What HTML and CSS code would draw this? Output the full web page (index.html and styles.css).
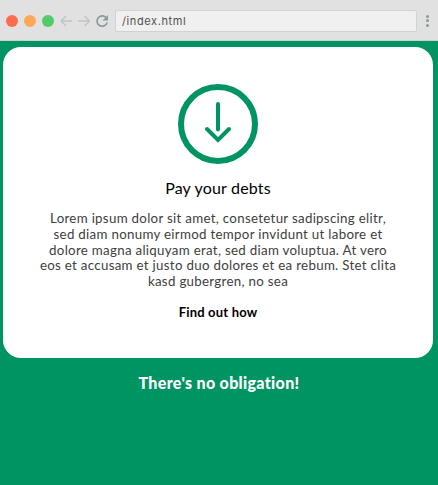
FILE: index.html
```html
<!DOCTYPE html>
<html lang="en">
<head>
<meta charset="utf-8">
<title>Pay your debts</title>
<link rel="stylesheet" href="styles.css">
</head>
<body>
<header class="toolbar">
  <div class="lights"><i class="red"></i><i class="amber"></i><i class="green"></i></div>
  <svg class="nav" width="50" height="16" viewBox="0 0 50 16" fill="none" stroke-width="1.3">
    <path stroke="#bfc3c5" d="M12 8H1M6 3L1 8l5 5M18 8H29.500M24.500 3l5 5-5 5"/>
    <path stroke="#8c989e" stroke-width="1.6" d="M46 4.500A5.200 5.200 0 1 0 47.200 9.500"/>
    <path fill="#8c989e" d="M48 2v5.500H42.500z"/>
  </svg>
  <div class="address">/index.html</div>
  <div class="menu"><i></i><i></i><i></i></div>
</header>
<main>
  <section class="card">
    <svg class="icon" width="80" height="80" viewBox="0 0 80 80" fill="none" stroke="#009463">
      <circle cx="40" cy="40" r="37" stroke-width="6"/>
      <path d="M40 20v25.500M29 45l11 11 11-11" stroke-width="4" stroke-linecap="round"/>
    </svg>
    <h1>Pay your debts</h1>
    <p>Lorem ipsum dolor sit amet, consetetur sadipscing elitr,<br>sed diam nonumy eirmod tempor invidunt ut labore et<br>dolore magna aliquyam erat, sed diam voluptua. At vero<br>eos et accusam et justo duo dolores et ea rebum. Stet clita<br>kasd gubergren, no sea</p>
    <a class="link">Find out how</a>
  </section>
  <h2>There's no obligation!</h2>
</main>
</body>
</html>
```
FILE: styles.css
```css
* { box-sizing: border-box; }
body { margin: 0; height: 485px; overflow: hidden; background: #009463; font-family: Lato, sans-serif; }
.toolbar { height: 41px; display: flex; align-items: center; padding: 1px 9px 0 6px; background: #e1e1e1; border-bottom: 1px solid #cfcfcf; }
.lights { display: flex; gap: 6px; }
.lights i { width: 12px; height: 12px; border-radius: 50%; }
.red { background: #ff6b4f; }
.amber { background: #ffa857; }
.green { background: #53cb68; }
.nav { margin-left: 6px; }
.address { width: 302px; height: 22px; margin-left: 5px; padding-left: 6px; border: 1px solid #d2d2d2; border-radius: 2px; background: #f0f0f0; color: #505050; font: 11px/20px Inter, sans-serif; letter-spacing: .6px; }
.menu { display: flex; flex-direction: column; gap: 1.500px; margin-left: auto; }
.menu i { width: 3px; height: 3px; border-radius: 50%; background: #8c989e; }
.card { display: flex; flex-direction: column; align-items: center; width: 430px; height: 311px; margin: 6px 0 0 3px; padding-top: 37px; border-radius: 18px; background: #fff; }
h1 { margin: 14px 0 0; font-size: 16px; line-height: 20px; font-weight: 400; letter-spacing: .18px; color: #000; }
p { margin: 13px 0 0; text-align: center; font-size: 13.300px; line-height: 15.800px; letter-spacing: .3px; color: #404040; white-space: nowrap; }
.link { margin-top: 13px; font-size: 13px; line-height: 18px; font-weight: 700; letter-spacing: .18px; }
h2 { margin: 15px 0 0; text-align: center; font-size: 16px; line-height: 20px; font-weight: 900; letter-spacing: .33px; color: #fff; }
```
